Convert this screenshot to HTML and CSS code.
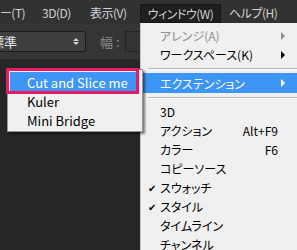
FILE: index.html
```html
<!DOCTYPE html>
<html lang="ja">
<head>
    <meta charset="UTF-8">
    <title>ウィンドウ メニュー</title>
    <link rel="stylesheet" href="styles.css">
</head>
<body>
    <div class="menubar">
        <span class="menubar-item filter">ー(T)</span>
        <span class="menubar-item threed">3D(D)</span>
        <span class="menubar-item view">表示(V)</span>
        <span class="menubar-item active">ウィンドウ(W)</span>
        <span class="menubar-item help">ヘルプ(H)</span>
    </div>

    <div class="options">
        <div class="select">
            <span class="select-text">標準</span>
            <span class="select-arrows">
                <span class="up"></span>
                <span class="down"></span>
            </span>
        </div>
        <span class="field-label">幅 :</span>
        <div class="field"></div>
    </div>

    <div class="workspace"></div>

    <div class="dropdown">
        <div class="item disabled"><span class="check"></span><span class="label">アレンジ(A)</span><span class="arrow"></span></div>
        <div class="item"><span class="check"></span><span class="label">ワークスペース(K)</span><span class="arrow"></span></div>
        <div class="sep"></div>
        <div class="item hl"><span class="check"></span><span class="label">エクステンション</span><span class="arrow"></span></div>
        <div class="sep"></div>
        <div class="item"><span class="check"></span><span class="label">3D</span></div>
        <div class="item"><span class="check"></span><span class="label">アクション</span><span class="key">Alt+F9</span></div>
        <div class="item"><span class="check"></span><span class="label">カラー</span><span class="key">F6</span></div>
        <div class="item"><span class="check"></span><span class="label">コピーソース</span></div>
        <div class="item"><span class="check">✔</span><span class="label">スウォッチ</span></div>
        <div class="item"><span class="check">✔</span><span class="label">スタイル</span></div>
        <div class="item"><span class="check"></span><span class="label">タイムライン</span></div>
        <div class="item"><span class="check"></span><span class="label">チャンネル</span></div>
    </div>

    <div class="submenu">
        <div class="item hl"><span class="label">Cut and Slice me</span></div>
        <div class="item"><span class="label">Kuler</span></div>
        <div class="item"><span class="label">Mini Bridge</span></div>
    </div>

    <div class="marker"></div>
</body>
</html>
```

FILE: styles.css
```css
* {
    margin: 0;
    padding: 0;
    box-sizing: border-box;
}

html {
    overflow: hidden;
}

body {
    width: 297px;
    height: 250px;
    overflow: hidden;
    position: relative;
    background: #262626;
    font-family: "Noto Sans CJK JP", "Noto Sans", sans-serif;
    font-feature-settings: "palt";
    font-size: 12px;
    white-space: nowrap;
    display: flex;
    flex-direction: column;
}

.menubar {
    height: 24px;
    background: #323232;
    display: flex;
    align-items: center;
    color: #d2d2d2;
    overflow: hidden;
    letter-spacing: -0.5px;
}

.menubar-item {
    flex-shrink: 0;
    height: 19px;
    line-height: 18px;
    margin-top: 2px;
}

.filter {
    width: 42px;
}

.threed {
    width: 48px;
}

.view {
    width: 50px;
}

.menubar-item.active {
    width: 81px;
    background: #1f1f1f;
    border: 1px solid #171717;
    text-align: center;
    line-height: 17px;
    margin-right: 8px;
}

.options {
    height: 36px;
    background: #353535;
    border-bottom: 1px solid #2a2a2a;
    display: flex;
    align-items: center;
}

.select {
    flex-shrink: 0;
    width: 88px;
    height: 21px;
    margin-left: -2px;
    background: #3f3f3f;
    border: 1px solid #1c1c1c;
    border-radius: 3px;
    display: flex;
    align-items: center;
    color: #e2e2e2;
    font-size: 13px;
    overflow: hidden;
}

.select-text {
    margin-left: -8px;
    flex: 1;
}

.select-arrows {
    width: 8px;
    margin-right: 4px;
    display: flex;
    flex-direction: column;
    gap: 1px;
}

.up, .down {
    width: 0;
    height: 0;
    border-left: 3px solid transparent;
    border-right: 3px solid transparent;
}

.up {
    border-bottom: 3px solid #d0d0d0;
}

.down {
    border-top: 3px solid #d0d0d0;
}

.field-label {
    flex-shrink: 0;
    margin-left: 14px;
    color: #8c8c8c;
    font-size: 13px;
    width: 25px;
}

.field {
    flex-shrink: 0;
    width: 30px;
    height: 21px;
    background: #333333;
    border: 1px solid #242424;
}

.workspace {
    flex: 1;
}

.dropdown {
    position: absolute;
    left: 140px;
    top: 23px;
    width: 170px;
    height: 227px;
    overflow: hidden;
    background: #f0f0f0;
    border-left: 1px solid #c8c8c8;
    padding: 3px 0 0 1px;
    color: #000;
}

.item {
    height: 19px;
    display: flex;
    align-items: center;
}

.dropdown .item.hl {
    margin-left: 1px;
    height: 20px;
}

.check {
    width: 18px;
    padding-left: 6px;
    font-size: 10px;
}

.dropdown .item.hl .check {
    width: 17px;
}

.label {
    flex: 1;
}

.key {
    width: 41px;
    text-align: right;
    margin-right: 32px;
}

.arrow {
    width: 0;
    height: 0;
    border-top: 4px solid transparent;
    border-bottom: 4px solid transparent;
    border-left: 4px solid #000;
    margin-right: 25px;
}

.disabled {
    color: #8d8d8d;
}

.disabled .arrow {
    border-left-color: #8d8d8d;
}

.hl {
    background: #3d95f5;
    color: #fff;
}

.hl .arrow {
    border-left-color: #fff;
}

.sep {
    height: 1px;
    background: #b4b4b4;
    border-bottom: 1px solid #fff;
    box-sizing: content-box;
    margin: 4px 0 3px 6px;
}

.submenu {
    position: absolute;
    left: 7px;
    top: 69px;
    width: 136px;
    background: #f0f0f0;
    border: 1px solid #979797;
    box-shadow: 2px 2px 2px rgba(0, 0, 0, 0.5);
    padding: 2px 6px 1px 2px;
    color: #000;
    font-size: 13px;
}

.submenu .item {
    padding-left: 17px;
}

.submenu .item.hl {
    height: 20px;
}

.marker {
    position: absolute;
    left: 6px;
    top: 68px;
    width: 133px;
    height: 26px;
    border: 3px solid #ea1865;
}
```
